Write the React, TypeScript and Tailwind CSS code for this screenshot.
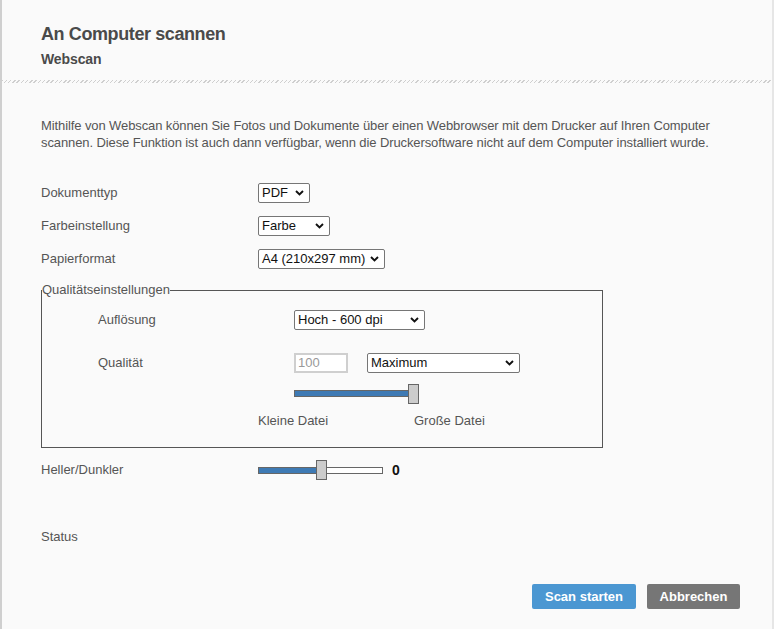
import React from "react";

const font = "font-['Liberation_Sans',Arial,sans-serif]";

function Chevron() {
  return (
    <svg width="9" height="6" viewBox="0 0 9 6" className="shrink-0">
      <polyline points="1,1 4.5,4.5 8,1" fill="none" stroke="#111" strokeWidth="1.9" />
    </svg>
  );
}

function Select({ value, width }: { value: string; width: string }) {
  return (
    <div
      className={`${width} h-[20px] flex items-center justify-between pl-[3px] pr-[5px] bg-white border border-[#767676] rounded-[2px] text-[13px] text-[#111]`}
    >
      <span className="leading-[18px] whitespace-nowrap">{value}</span>
      <Chevron />
    </div>
  );
}

function Row({ label, children }: { label: string; children: React.ReactNode }) {
  return (
    <div className="h-[33px] flex items-center">
      <div className="w-[217px] text-[13px] text-[#555]">{label}</div>
      {children}
    </div>
  );
}

export default function App() {
  return (
    <div className={`${font} min-h-screen w-[774px] bg-[#fafafa] border-l-2 border-l-[#cfcfcf] border-r-2 border-r-[#e6e6e6] flex flex-col`}>
      {/* Header */}
      <div className="h-[80px] pl-[39px] pt-[22px]">
        <h1 className="text-[18px] leading-[24px] tracking-[-0.4px] font-bold text-[#4a4a4a]">An Computer scannen</h1>
        <h2 className="mt-[3px] text-[14px] leading-[20px] tracking-[-0.1px] font-bold text-[#4a4a4a]">Webscan</h2>
      </div>
      <div className="h-[3px] bg-[repeating-linear-gradient(135deg,#cfcfcf_0px,#cfcfcf_1px,transparent_1px,transparent_3px)]" />

      <div className="pl-[39px]">
        <p className="mt-[34px] w-[700px] text-[13px] leading-[17px] tracking-[-0.1px] text-[#555]">
          Mithilfe von Webscan können Sie Fotos und Dokumente über einen Webbrowser mit dem Drucker auf Ihren Computer
          scannen. Diese Funktion ist auch dann verfügbar, wenn die Druckersoftware nicht auf dem Computer installiert wurde.
        </p>

        <div className="mt-[25px]">
          <Row label="Dokumenttyp">
            <Select value="PDF" width="w-[52px]" />
          </Row>
          <Row label="Farbeinstellung">
            <Select value="Farbe" width="w-[72px]" />
          </Row>
          <Row label="Papierformat">
            <Select value="A4 (210x297 mm)" width="w-[127px]" />
          </Row>
        </div>

        {/* Quality settings */}
        <fieldset className="mt-[7px] w-[562px] border border-[#555]">
          <legend className="text-[13px] leading-[16px] text-[#555]">Qualitätseinstellungen</legend>
          <div className="pl-[56px] pb-[18px]">
            <div className="h-[43px] flex items-center">
              <div className="w-[196px] text-[13px] text-[#555]">Auflösung</div>
              <Select value="Hoch - 600 dpi" width="w-[131px]" />
            </div>
            <div className="h-[43px] flex items-center">
              <div className="w-[196px] text-[13px] text-[#555]">Qualität</div>
              <div className="w-[54px] h-[20px] flex items-center pl-[2px] bg-white border-2 border-[#cfcfcf] text-[13px] text-[#999]">
                100
              </div>
              <div className="ml-[19px]">
                <Select value="Maximum" width="w-[153px]" />
              </div>
            </div>
            <div className="ml-[196px] relative w-[125px] h-[20px]">
              <div className="absolute left-0 top-[6px] w-[118px] h-[7px] bg-[#3e7ab4] border border-[#666]" />
              <div className="absolute left-[114px] top-0 w-[11px] h-[20px] bg-[#cccccc] border border-[#666]" />
            </div>
            <div className="mt-[8px] ml-[160px] flex text-[13px] leading-[17px] text-[#555]">
              <span className="w-[156px]">Kleine Datei</span>
              <span>Große Datei</span>
            </div>
          </div>
        </fieldset>

        <div className="h-[44px] flex items-center">
          <div className="w-[217px] text-[13px] text-[#555]">Heller/Dunkler</div>
          <div className="relative w-[125px] h-[20px]">
            <div className="absolute left-0 top-[7px] w-[125px] h-[7px] bg-white border border-[#666]" />
            <div className="absolute left-0 top-[7px] w-[60px] h-[7px] bg-[#3e7ab4] border border-[#666] border-r-0" />
            <div className="absolute left-[58px] top-0 w-[11px] h-[20px] bg-[#cccccc] border border-[#666]" />
          </div>
          <span className="ml-[9px] text-[14px] font-bold text-[#111]">0</span>
        </div>

        <div className="mt-[35px] h-[20px] flex items-center text-[13px] text-[#555]">Status</div>
      </div>

      <div className="mt-[37px] flex justify-end gap-[11px] pr-[32px]">
        <button className="w-[104px] h-[25px] rounded-[2px] bg-[#4b97d2] text-white text-[13px] font-bold">
          Scan starten
        </button>
        <button className="w-[93px] h-[25px] rounded-[2px] bg-[#767676] text-white text-[13px] font-bold">
          Abbrechen
        </button>
      </div>
    </div>
  );
}
